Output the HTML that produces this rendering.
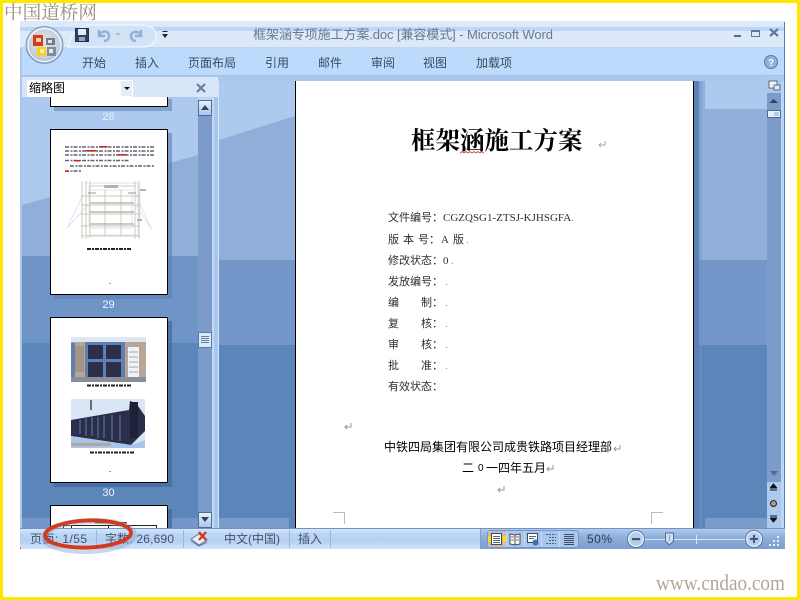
<!DOCTYPE html>
<html lang="zh-CN">
<head>
<meta charset="utf-8">
<title>框架涵专项施工方案</title>
<style>
html,body{margin:0;padding:0;width:800px;height:600px;overflow:hidden;background:#fff}
svg{position:absolute;left:0;top:0;display:block}
text{white-space:pre}
.ui{font-family:"Liberation Sans","Noto Sans CJK SC",sans-serif}
.doc{font-family:"Liberation Serif","Noto Sans CJK SC",sans-serif}
</style>
</head>
<body>
<svg width="800" height="600" viewBox="0 0 800 600" xmlns="http://www.w3.org/2000/svg">
<defs>
<linearGradient id="st" x1="0" y1="0" x2="0" y2="1">
<stop offset="0" stop-color="#dbe8fa"/><stop offset=".3" stop-color="#bcd5f6"/><stop offset=".6" stop-color="#b4d0f4"/><stop offset="1" stop-color="#d2e3fa"/>
</linearGradient>
<linearGradient id="st2" x1="0" y1="0" x2="0" y2="1">
<stop offset="0" stop-color="#b4cdf0"/><stop offset=".45" stop-color="#8eadd9"/><stop offset="1" stop-color="#7c9ed0"/>
</linearGradient>
<radialGradient id="orb" cx=".5" cy=".45" r=".55">
<stop offset="0" stop-color="#e8e4dc"/><stop offset=".75" stop-color="#c4cfdd"/><stop offset="1" stop-color="#8ba6c8"/>
</radialGradient>
<linearGradient id="btn" x1="0" y1="0" x2="0" y2="1">
<stop offset="0" stop-color="#eaf2fc"/><stop offset="1" stop-color="#a8c4ea"/>
</linearGradient>
</defs>

<!-- page frame -->
<rect x="0" y="0" width="800" height="600" fill="#ffe800"/>
<rect x="3" y="3" width="794" height="594" fill="#fff"/>

<!-- window chrome -->
<rect x="20" y="21" width="765" height="528" fill="#bcd6f7"/>
<rect x="20" y="21" width="765" height="6" fill="#dce9f8"/>
<rect x="20" y="27" width="765" height="4" fill="#bcd6f7"/>
<rect x="20" y="31" width="765" height="16" fill="#dde9f8"/>
<rect x="20" y="47" width="765" height="2" fill="#c3d6ef"/>
<rect x="20" y="49" width="765" height="26" fill="#bcdafc"/>
<rect x="20" y="75" width="765" height="1" fill="#a9c2e4"/>
<rect x="20" y="76" width="765" height="5" fill="#abc8ec"/>
<rect x="784" y="22" width="1" height="527" fill="#5a7ba8"/>
<rect x="20" y="48" width="2" height="480" fill="#a8c6ee"/>

<!-- document background -->
<rect x="219" y="81" width="548" height="447" fill="#8fafd9"/>
<polygon points="219,81 767,81 767,109 705,109 705,81 295,81 295,116 219,140" fill="#adc9ed"/>
<rect x="219" y="260" width="548" height="85" fill="#7397c8"/>
<rect x="219" y="345" width="548" height="183" fill="#5c86ba"/>
<rect x="219" y="518" width="70" height="10" fill="#7a9ccb"/>
<rect x="705" y="518" width="62" height="10" fill="#7a9ccb"/>
<rect x="694" y="81" width="5" height="447" fill="#5b82b6"/>
<rect x="699" y="81" width="3" height="447" fill="#7092c4" opacity=".4"/>

<!-- left pane background -->
<rect x="22" y="76" width="176" height="452" fill="#8fafd9"/>
<polygon points="22,76 198,76 198,155 22,205" fill="#adc9ed"/>
<rect x="22" y="256" width="176" height="87" fill="#6f95c6"/>
<rect x="22" y="343" width="176" height="185" fill="#5c86ba"/>
<rect x="22" y="518" width="176" height="10" fill="#7397c8"/>

<!-- pane splitters -->
<rect x="198" y="100" width="14" height="428" fill="#7b9ccb"/>
<rect x="212" y="81" width="2" height="447" fill="#c2d8f5"/>
<rect x="214" y="81" width="4" height="447" fill="#a9c6ec"/>
<rect x="218" y="81" width="1" height="447" fill="#d8e6f8"/>

<!-- pane header -->
<rect x="22" y="77" width="196" height="20" fill="#d6e5f8"/>
<rect x="27" y="80" width="106" height="17" fill="#fff"/>
<rect x="121" y="81" width="11" height="15" fill="#e4eefa"/>
<polygon points="124,87 130,87 127,90" fill="#111"/>
<text class="ui" x="29" y="92" font-size="12" fill="#000">缩略图</text>
<path d="M197 84 L205 92 M205 84 L197 92" stroke="#6d7f9c" stroke-width="2.200" fill="none"/>

<!-- thumb 28 -->
<rect x="54" y="99" width="118" height="12" fill="#5e82b4" opacity=".55"/>
<rect x="50" y="97" width="118" height="10" fill="#fff"/>
<path d="M50.500 97 V106.500 H167.500 V97" fill="none" stroke="#000"/>
<text class="ui" x="108.500" y="120" font-size="11" fill="#e8f0fb" text-anchor="middle">28</text>

<!-- thumb 29 -->
<rect x="54" y="133" width="118" height="166" fill="#5b7fb1" opacity=".6"/>
<rect x="50.500" y="129.500" width="117" height="165" fill="#fff" stroke="#000"/>
<g stroke="#3a3a4a" stroke-width="1.500" stroke-dasharray="4 1.500 2 1" opacity=".8">
<path d="M65 147H155M65 151H155M65 155H155M65 160.500H130M70 166H154M65 171H81"/>
</g>
<g fill="#d02020">
<rect x="86" y="150" width="10" height="1.500"/><rect x="118" y="154" width="8" height="1.500"/><rect x="100" y="146" width="7" height="1.500"/><rect x="74" y="160" width="6" height="1.500"/><rect x="65" y="170.500" width="4" height="1.500"/>
</g>
<g fill="none" stroke-width="1">
<g stroke="#dbe6f5">
<rect x="89" y="186" width="46" height="40"/><rect x="86" y="183" width="52" height="52"/><rect x="90" y="190" width="42" height="38"/>
<path d="M88 205 L67 228 M136 205 L152 230 M83 195 L67 228 M136 195 L152 230 M140 191 L140 220"/>
</g>
<g stroke="#cfc7bb">
<path d="M82 181V239M86 181V239M135 181V239M139 181V239M90 181V238M105 190V236M121 190V236"/>
<path d="M81 196H140M81 205H140M81 214H140M81 226H140M81 236H140M90 186H135"/>
</g>
<g stroke="#9b948b">
<path d="M88 193H96M128 193H136M90 203H134M90 212H134M90 224H134"/>
</g>
</g>
<rect x="104" y="185" width="14" height="3" fill="#b9b1a5"/>
<rect x="140" y="189" width="6" height="2" fill="#b9b1a5"/>
<rect x="137" y="219" width="5" height="2" fill="#b9b1a5"/>
<path d="M87 249H131" stroke="#23232d" stroke-width="2" stroke-dasharray="4 1 2 1"/>
<rect x="109" y="283" width="2" height="1" fill="#999"/>
<text class="ui" x="108.500" y="308" font-size="11" fill="#f0f5fc" text-anchor="middle">29</text>

<!-- thumb 30 -->
<rect x="54" y="321" width="118" height="166" fill="#44699d" opacity=".75"/>
<rect x="50.500" y="317.500" width="117" height="165" fill="#fff" stroke="#000"/>
<!-- photo 1 -->
<rect x="71" y="337" width="75" height="45" fill="#b5a698"/>
<rect x="71" y="337" width="75" height="5" fill="#dfe8f2"/>
<rect x="71" y="343" width="4" height="39" fill="#5d7fb2"/>
<rect x="85" y="342" width="40" height="40" fill="#5d7fb2"/>
<rect x="88" y="345" width="15" height="14" fill="#2b2f4a"/>
<rect x="106" y="345" width="15" height="14" fill="#2b2f4a"/>
<rect x="88" y="362" width="15" height="16" fill="#2b2f4a"/>
<rect x="106" y="362" width="15" height="16" fill="#2b2f4a"/>
<rect x="128" y="347" width="11" height="30" fill="#eef3fa"/>
<path d="M129 352H138M129 357H138M129 362H138M129 367H138M129 372H138" stroke="#b5a698"/>
<rect x="75" y="346" width="9" height="26" fill="#a39486"/>
<rect x="71" y="377" width="75" height="5" fill="#8c8d9a"/>
<!-- photo 2 -->
<rect x="71" y="399" width="74" height="49" fill="#d9e6f6"/>
<polygon points="71,420 129,410 130,401 136,403 145,416 145,431 131,445 71,436" fill="#2a2e48"/>
<rect x="130" y="402" width="8" height="36" fill="#1f2236"/>
<rect x="90" y="400" width="2" height="10" fill="#6a6a78"/>
<polygon points="71,436 131,445 145,440 145,448 71,448" fill="#a9c5ea"/>
<rect x="71" y="443" width="40" height="3" fill="#b5a698"/>
<path d="M80 420V434M86 418V436M92 417V436M98 417V438M104 416V438M112 415V440M120 415V441" stroke="#5d7fb2"/>
<path d="M87 385.500H131" stroke="#23232d" stroke-width="2" stroke-dasharray="4 1 2 1"/>
<path d="M90 452.500H134" stroke="#23232d" stroke-width="2" stroke-dasharray="4 1 2 1"/>
<rect x="109" y="471" width="2" height="1" fill="#999"/>
<text class="ui" x="108.500" y="496" font-size="11" fill="#f0f5fc" text-anchor="middle">30</text>

<!-- thumb 31 -->
<rect x="54" y="509" width="118" height="19" fill="#44699d" opacity=".75"/>
<rect x="50.500" y="505.500" width="117" height="23" fill="#fff" stroke="#000"/>
<path d="M63.500 528V525.500H156.500V528M71.500 525V528M108.500 525V528M129.500 525V528" fill="none" stroke="#222"/>
<rect x="95" y="522" width="32" height="1.400" fill="#444"/>

<!-- left scrollbar -->
<rect x="198.500" y="100.500" width="13" height="15" fill="url(#btn)" stroke="#4d6c99"/>
<polygon points="201,110 205,105 209,110" fill="#2f4463"/>
<rect x="198.500" y="332.500" width="13" height="15" fill="#dce8f8" stroke="#5b7aa5"/>
<path d="M201 336.500H209M201 338.500H209M201 340.500H209M201 342.500H209" stroke="#6b7f9e"/>
<rect x="198.500" y="512.500" width="13" height="15" fill="url(#btn)" stroke="#4d6c99"/>
<polygon points="201,517 209,517 205,522" fill="#2f4463"/>

<!-- doc page -->
<rect x="295" y="81" width="399" height="447" fill="#fff"/>
<rect x="295" y="81" width="1" height="447" fill="#000"/>
<rect x="693" y="81" width="1" height="447" fill="#000"/>

<text x="411" y="149" font-size="24.500" font-weight="700" fill="#000" font-family="'Noto Serif CJK SC','Liberation Serif',serif">框架涵施工方案</text>
<path d="M460 153 l2 -1.500 l2 1.500 l2 -1.500 l2 1.500 l2 -1.500 l2 1.500 l2 -1.500 l2 1.500 l2 -1.500 l2 1.500 l2 -1.500 l2 1.500" stroke="#cc4040" fill="none" stroke-width=".8"/>
<path d="M605 141V145H599M601 143L599 145L601 147" stroke="#aaa" fill="none"/>

<g class="doc" font-size="11" fill="#2b2f35">
<text x="388" y="221">文件编号：</text><text x="443" y="221">CGZQSG1-ZTSJ-KJHSGFA</text>
<text x="388" y="243">版</text><text x="403" y="243">本</text><text x="418" y="243">号：</text><text x="441" y="243">A</text><text x="453" y="243">版</text>
<text x="388" y="264">修改状态：</text><text x="443" y="264">0</text>
<text x="388" y="285">发放编号：</text>
<text x="388" y="306">编</text><text x="421" y="306">制：</text>
<text x="388" y="327">复</text><text x="421" y="327">核：</text>
<text x="388" y="348">审</text><text x="421" y="348">核：</text>
<text x="388" y="369">批</text><text x="421" y="369">准：</text>
<text x="388" y="390">有效状态：</text>
</g>
<g font-size="10" fill="#888" font-family="'Liberation Sans',sans-serif">
<text x="571" y="221">.</text><text x="466" y="243">.</text><text x="451" y="264">.</text>
<text x="445" y="285">.</text><text x="445" y="306">.</text><text x="445" y="327">.</text><text x="445" y="348">.</text><text x="445" y="369">.</text>
</g>

<path d="M351 423V427H345M347 425L345 427L347 429" stroke="#999" fill="none"/>
<text class="ui" x="384" y="451" font-size="12" fill="#000">中铁四局集团有限公司成贵铁路项目经理部</text>
<path d="M620 445V449H614M616 447L614 449L616 451" stroke="#999" fill="none"/>
<g class="ui" font-size="12" fill="#000">
<text x="462" y="472">二</text><text x="478" y="471" font-size="10">0</text><text x="486" y="472">一四年五月</text>
</g>
<path d="M553 465V469H547M549 467L547 469L549 471" stroke="#999" fill="none"/>
<path d="M504 486V490H498M500 488L498 490L500 492" stroke="#999" fill="none"/>

<path d="M333 512.500H344.500V524" fill="none" stroke="#c9b9a8"/>
<path d="M651.500 524V512.500H663" fill="none" stroke="#c9b9a8"/>

<!-- right bar -->
<rect x="767" y="76" width="17" height="452" fill="#adc9ed"/>
<rect x="767" y="93" width="14" height="389" fill="#7b9ccb"/>
<rect x="781" y="81" width="3" height="447" fill="#bcd6f7"/>
<rect x="769" y="81" width="8" height="7" fill="#eef4fc" stroke="#44526a" stroke-width=".8"/>
<rect x="774" y="85" width="6" height="5" fill="#dce8f8" stroke="#44526a" stroke-width=".8"/>
<polygon points="769.500,103 773.500,99 778,103" fill="#2f4463"/>
<rect x="767.500" y="110.500" width="13" height="7" fill="#e6eefa" stroke="#4f6a93"/>
<rect x="774" y="112" width="5" height="4" fill="#b5cdec"/>
<polygon points="770,471 778,471 774,476" fill="#4f6a93"/>
<path d="M770 488H777M773.500 484L771 487H776ZM770 490H777" stroke="#111" fill="#111"/>
<circle cx="773.500" cy="503.500" r="3" fill="#a89c90" stroke="#222"/>
<path d="M770 516H777M773.500 522L771 519H776ZM770 518H777" stroke="#111" fill="#111"/>

<!-- status bar -->
<rect x="20" y="528" width="460" height="21" fill="url(#st)"/>
<rect x="480" y="528" width="305" height="21" fill="url(#st2)"/>
<rect x="20" y="528" width="765" height="1" fill="#6f93c4"/>
<rect x="20" y="548" width="1" height="1" fill="#3a4a66"/>
<path d="M96.500 530V548M183.500 530V548M289.500 530V548M330.500 530V548" stroke="#9ab6de"/>
<rect x="480" y="529" width="1" height="20" fill="#7f9fcc"/>
<g class="ui" font-size="12" fill="#42536b">
<text x="30" y="543" textLength="57">页面: 1/55</text>
<text x="105" y="543" textLength="69">字数: 26,690</text>
<text x="224" y="543">中文(中国)</text>
<text x="298" y="543">插入</text>
<text x="587" y="543" fill="#2e3d55" textLength="25">50%</text>
</g>
<!-- proofing icon -->
<path d="M191 539 L199 534 L207 540 L199 545 Z" fill="#e9eff8" stroke="#5a78a5"/>
<path d="M191 541 L199 546 L207 542" fill="none" stroke="#5a78a5"/>
<path d="M199 532 L206 540 M206 532 L199 540" stroke="#d9301c" stroke-width="2.200"/>

<!-- view buttons -->
<rect x="487.500" y="530.500" width="91" height="17" rx="3" fill="#a9c6ee" stroke="#7597c8"/>
<rect x="488" y="531" width="18" height="16" fill="#c9bcae"/>
<rect x="488" y="536" width="3" height="6" fill="#ffe000"/><rect x="503" y="536" width="3" height="6" fill="#ffe000"/>
<path d="M506.500 531V547M524.500 531V547M541.500 531V547M559.500 531V547" stroke="#c5d9f5"/>
<rect x="491.500" y="533.500" width="10" height="11" fill="#fff" stroke="#3d4c63"/>
<path d="M493 536.500H500M493 538.500H500M493 540.500H500M493 542.500H500" stroke="#5a677a"/>
<path d="M510 534 L515 535 L520 534 V544 L515 545 L510 544Z M515 535V545" fill="#fff" stroke="#3d4c63"/>
<path d="M511 537H514M516 537H519M511 540H514M516 540H519" stroke="#c24a3a"/>
<rect x="527.500" y="533.500" width="10" height="9" fill="#fff" stroke="#3d4c63"/>
<path d="M529 536.500H536M529 538.500H534" stroke="#5a677a"/>
<circle cx="535.500" cy="542.500" r="3" fill="#3f6ea8"/>
<path d="M546 534.500H556M549 537.500H556M549 540.500H556M546 543.500H556" stroke="#4a5a72" stroke-dasharray="2 1"/>
<path d="M564 534.500H574M564 536.500H574M564 538.500H574M564 540.500H574M564 542.500H574M564 544.500H574" stroke="#3d4c63"/>

<!-- zoom slider -->
<path d="M644 539.500H745" stroke="#dce8f8"/>
<path d="M696.500 535V544" stroke="#dce8f8"/>
<circle cx="636" cy="539" r="7.500" fill="#b6cdec" stroke="#eef4fc" stroke-width="1.500"/>
<circle cx="636" cy="539" r="8.500" fill="none" stroke="#5a7cab"/>
<rect x="632" y="538" width="8" height="2.200" fill="#44566f"/>
<circle cx="754" cy="539" r="7.500" fill="#b6cdec" stroke="#eef4fc" stroke-width="1.500"/>
<circle cx="754" cy="539" r="8.500" fill="none" stroke="#5a7cab"/>
<path d="M750 539H758M754 535V543" stroke="#44566f" stroke-width="2"/>
<path d="M665.500 533H673.500V541L669.500 545L665.500 541Z" fill="#cfe0f6" stroke="#5a6f8e"/>
<path d="M669.500 535V541" stroke="#8aa0bf"/>
<g fill="#e8f0fb"><rect x="777" y="536" width="2" height="2"/><rect x="773" y="540" width="2" height="2"/><rect x="777" y="540" width="2" height="2"/><rect x="769" y="544" width="2" height="2"/><rect x="773" y="544" width="2" height="2"/><rect x="777" y="544" width="2" height="2"/></g>

<!-- red annotation ellipse -->
<ellipse cx="89" cy="536" rx="45" ry="15" fill="none" stroke="#8ea9cf" stroke-width="6" opacity=".45" transform="rotate(-2 89 536)"/>
<ellipse cx="88" cy="534" rx="43" ry="13.500" fill="none" stroke="#d23a1e" stroke-width="3.800" transform="rotate(-2 88 534)"/>

<!-- title bar contents -->
<path d="M68 48 C70 34 80 25 92 25 H140 C152 25 157 30 156 37 C155 43 150 47 140 47 H68Z" fill="#d2e2f7" stroke="#f2f7fe" stroke-width="1.200"/>
<!-- office orb -->
<circle cx="44.500" cy="45" r="18.500" fill="url(#orb)" stroke="#7f9cc2"/>
<circle cx="44.500" cy="45" r="16.500" fill="none" stroke="#f6f8fb" stroke-width="1.200"/>
<rect x="33" y="35" width="10" height="11" fill="#d43b1c"/><rect x="36" y="38" width="5" height="4" fill="#f5d0b0"/>
<rect x="37" y="47" width="9" height="9" fill="#f4d41c"/><rect x="40" y="49" width="4" height="4" fill="#fff2a0"/>
<rect x="46" y="38" width="9" height="7" fill="#6f7f93"/><rect x="48" y="40" width="4" height="3" fill="#dce4ee"/>
<rect x="47" y="47" width="9" height="9" fill="#7f8d9f"/><rect x="49" y="49" width="4" height="4" fill="#e3e8ef"/>

<!-- QAT icons -->
<rect x="75.500" y="28.500" width="13" height="13" fill="#2f4060" stroke="#22304a"/>
<rect x="78" y="29" width="8" height="6" fill="#e4ecf8"/>
<rect x="79" y="37" width="6" height="4" fill="#95a6bf"/>
<path d="M99 30V36H105M99 36C101 30 109 30 109 36C109 39 107 41 104 41" fill="none" stroke="#96b1d3" stroke-width="2.400"/>
<polygon points="115,33 121,33 118,36" fill="#c5b9ab"/>
<path d="M141 30V36H135M141 36C139 30 131 31 131 36C131 39 133 41 136 41" fill="none" stroke="#96b1d3" stroke-width="2.600"/>
<path d="M162.500 31.500H167.500" stroke="#222"/>
<polygon points="162,34 168,34 165,38" fill="#222"/>

<text class="ui" x="253" y="39" font-size="13" fill="#68798f" textLength="300">框架涵专项施工方案.doc [兼容模式] - Microsoft Word</text>

<!-- window controls -->
<rect x="734" y="35" width="7" height="2" fill="#4f6c94"/>
<rect x="751.500" y="30.500" width="8" height="6" fill="none" stroke="#5a7aa3"/><rect x="751" y="30" width="9" height="2" fill="#5a7aa3"/>
<path d="M770 29L778 36M778 29L770 36" stroke="#5a7aa3" stroke-width="2.200"/>

<!-- tabs -->
<g class="ui" font-size="12" fill="#3a4a5f">
<text x="82" y="67">开始</text>
<text x="135" y="67">插入</text>
<text x="188" y="67">页面布局</text>
<text x="265" y="67">引用</text>
<text x="318" y="67">邮件</text>
<text x="371" y="67">审阅</text>
<text x="423" y="67">视图</text>
<text x="476" y="67">加载项</text>
</g>
<circle cx="771" cy="62" r="6.500" fill="#8fb0d9" stroke="#5b7ba8"/>
<text class="ui" x="771" y="66" font-size="10" font-weight="700" fill="#fff" text-anchor="middle">?</text>

<!-- watermarks -->
<text x="4" y="19" font-size="18.600" fill="#9a8b80" font-family="'Noto Serif CJK SC','IPAGothic',serif">中国道桥网</text>
<text x="656" y="590" font-size="22" fill="#b5a595" font-family="'Liberation Serif',serif" textLength="129" lengthAdjust="spacingAndGlyphs">www.cndao.com</text>
</svg>
</body>
</html>
